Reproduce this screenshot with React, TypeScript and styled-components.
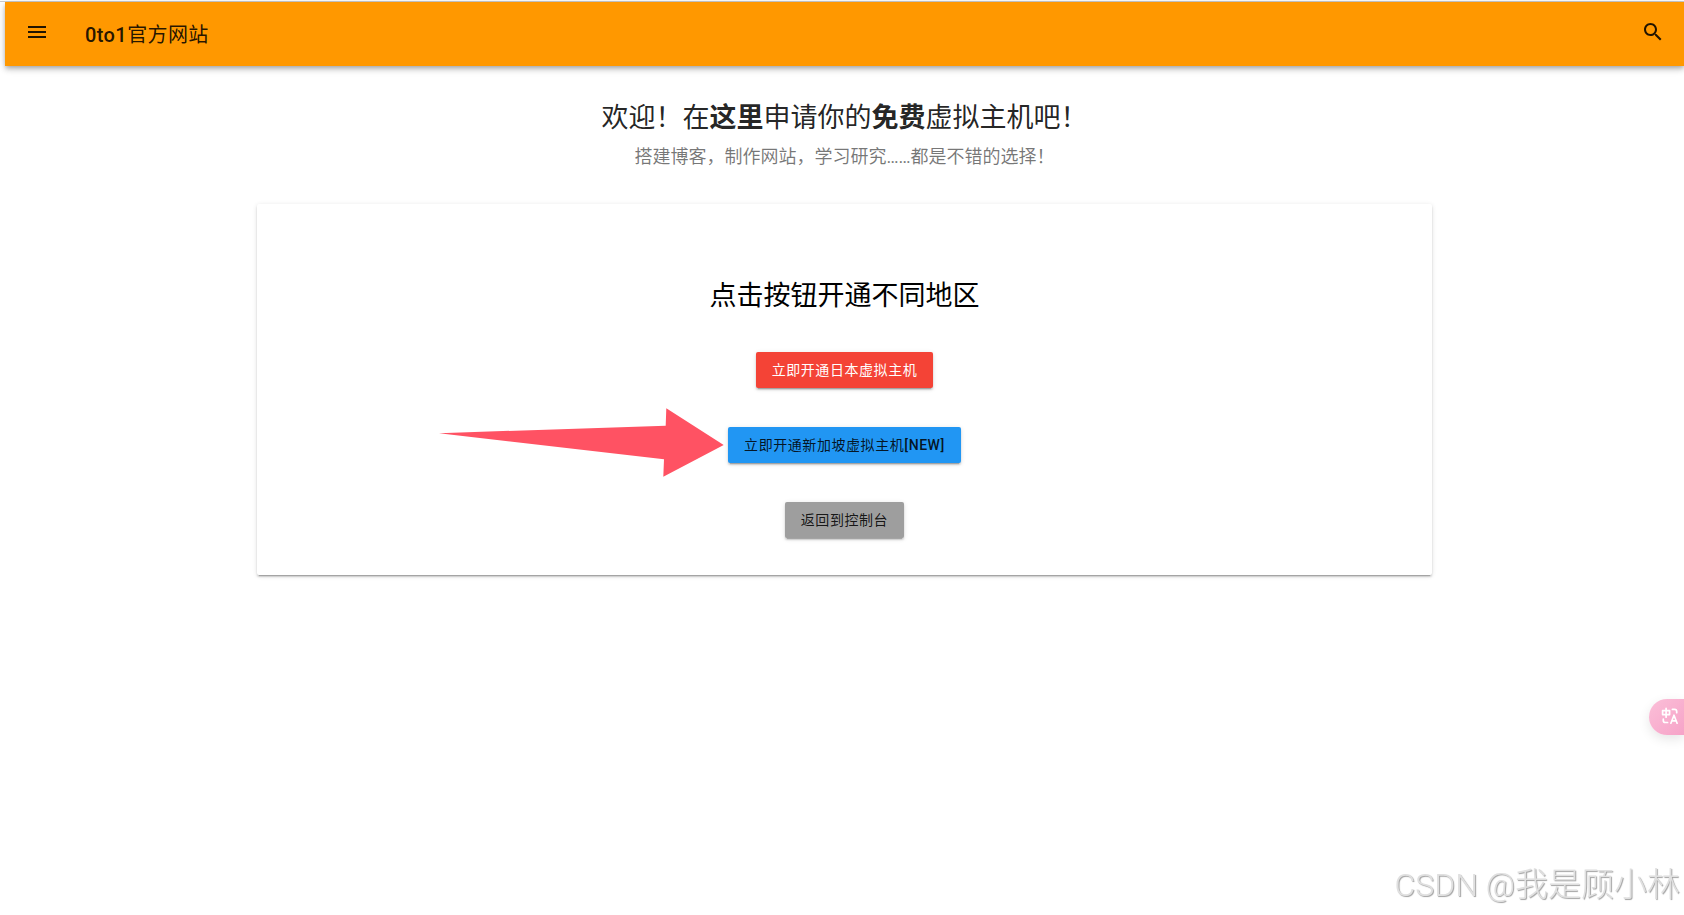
import React from 'react';
import styled, { createGlobalStyle } from 'styled-components';

const GlobalStyle = createGlobalStyle`
  *, *::before, *::after { box-sizing: border-box; }
  body {
    margin: 0;
    background: #fff;
    color: rgba(0, 0, 0, 0.87);
    font-family: Roboto, "Noto Sans CJK SC", sans-serif;
    font-size: 14px;
  }
`;

const Page = styled.div`
  min-height: 100vh;
  padding: 1px 0 0 5px;
  overflow: hidden;
`;

const TopRule = styled.div`
  height: 1px;
  margin-left: -5px;
  background: #ccc;
`;

const AppBar = styled.header`
  display: flex;
  align-items: center;
  height: 64px;
  padding: 0 7px 0 8px;
  background: #ff9800;
  box-shadow: 0 2px 4px -1px rgba(0, 0, 0, 0.2), 0 4px 5px 0 rgba(0, 0, 0, 0.14),
    0 1px 10px 0 rgba(0, 0, 0, 0.12);
`;

const IconButton = styled.button`
  display: flex;
  align-items: center;
  justify-content: center;
  align-self: flex-start;
  width: 48px;
  height: 60px;
  padding: 0;
  border: 0;
  background: none;
  color: rgba(0, 0, 0, 0.87);
  cursor: pointer;
`;

const SiteTitle = styled.a`
  flex: 1;
  padding: 2px 24px 0;
  color: inherit;
  font-size: 20px;
  font-weight: 500;
  letter-spacing: 0.02em;
  line-height: 28px;
  text-decoration: none;
`;

const Regular = styled.span`
  font-weight: 400;
`;

const Medium = styled.span`
  font-weight: 500;
`;

const Intro = styled.section`
  padding: 33px 16px 27px;
  text-align: center;
`;

const Headline = styled.h1`
  margin: 0;
  font-size: 27px;
  font-weight: 400;
  line-height: 38px;
`;

const Subtitle = styled.p`
  margin: 0;
  color: rgba(0, 0, 0, 0.54);
  font-size: 18px;
  line-height: 40px;
`;

const raised = `
  border-radius: 2px;
  box-shadow: 0 3px 1px -2px rgba(0, 0, 0, 0.2), 0 2px 2px 0 rgba(0, 0, 0, 0.14),
    0 1px 5px 0 rgba(0, 0, 0, 0.12);
`;

const Card = styled.main`
  width: 70%;
  margin: 0 auto;
  padding: 73px 16px 37px;
  background: #fff;
  ${raised}
`;

const CardTitle = styled.h2`
  margin: 0;
  color: #000;
  font-size: 27px;
  font-weight: 400;
  line-height: 38px;
  text-align: center;
`;

const Actions = styled.div`
  display: flex;
  flex-direction: column;
  align-items: center;
  gap: 39px;
  margin-top: 37px;
`;

const ActionItem = styled.div`
  position: relative;
`;

const ActionButton = styled.button<{ $fill: string; $light?: boolean }>`
  display: block;
  height: 36px;
  padding: 0 16px;
  border: 0;
  background: ${(p) => p.$fill};
  color: ${(p) => (p.$light ? '#fff' : 'rgba(0, 0, 0, 0.87)')};
  font-family: inherit;
  font-size: 14px;
  font-weight: 400;
  letter-spacing: 0.04em;
  line-height: 36px;
  white-space: nowrap;
  cursor: pointer;
  ${raised}
`;

/* Pointer drawn over the card, beside the button it highlights */
const Arrow = styled.svg`
  position: absolute;
  top: -19px;
  right: calc(100% + 4px);
  pointer-events: none;
`;

const TranslateTab = styled.button`
  position: fixed;
  right: 0;
  bottom: 180px;
  display: flex;
  align-items: center;
  width: 35px;
  height: 36px;
  padding: 0 0 2px 12px;
  border: 0;
  border-radius: 18px 0 0 18px;
  background: linear-gradient(135deg, #fbbfd8, #f6a3c8);
  box-shadow: 0 4px 12px rgba(0, 0, 0, 0.1);
  cursor: pointer;
`;

const Watermark = styled.div`
  position: fixed;
  right: 4px;
  bottom: 8px;
  color: #e0e0e0;
  font-size: 33px;
  font-weight: 300;
  line-height: 44px;
  text-shadow: 1px 1px 1px #a0a0a0;
  white-space: nowrap;
  pointer-events: none;
`;

const WatermarkSite = styled.span`
  font-size: 32px;
`;

export default function App() {
  return (
    <>
      <GlobalStyle />
      <Page>
        <TopRule />
        <AppBar>
          <IconButton aria-label="菜单">
            <svg width="24" height="24" viewBox="0 0 24 24" fill="currentColor">
              <path d="M3 18h18v-2H3v2zm0-5h18v-2H3v2zm0-7v2h18V6H3z" />
            </svg>
          </IconButton>
          <SiteTitle href="#">
            0to1<Regular>官方网站</Regular>
          </SiteTitle>
          <IconButton aria-label="搜索">
            <svg width="24" height="24" viewBox="0 0 24 24" fill="currentColor">
              <path d="M15.5 14h-.79l-.28-.27C15.41 12.59 16 11.11 16 9.5 16 5.91 13.09 3 9.5 3S3 5.91 3 9.5 5.91 16 9.5 16c1.61 0 3.09-.59 4.23-1.57l.27.28v.79l5 4.99L20.49 19l-4.99-5zm-6 0C7.01 14 5 11.99 5 9.5S7.01 5 9.5 5 14 7.01 14 9.5 11.99 14 9.5 14z" />
            </svg>
          </IconButton>
        </AppBar>

        <Intro>
          <Headline>
            欢迎！在<strong>这里</strong>申请你的<strong>免费</strong>虚拟主机吧！
          </Headline>
          <Subtitle>搭建博客，制作网站，学习研究……都是不错的选择！</Subtitle>
        </Intro>

        <Card>
          <CardTitle>点击按钮开通不同地区</CardTitle>
          <Actions>
            <ActionButton $fill="#f44336" $light>
              立即开通日本虚拟主机
            </ActionButton>
            <ActionItem>
              <ActionButton $fill="#2196f3">
                立即开通新加坡虚拟主机<Medium>[NEW]</Medium>
              </ActionButton>
              <Arrow width="285" height="70" viewBox="0 0 285 70" aria-hidden="true">
                <path
                  d="M0 25.2 226.7 17.7 227.3 0.2 284.7 37 224.3 68.8 225 51.3Z"
                  fill="#ff5263"
                />
              </Arrow>
            </ActionItem>
            <ActionButton $fill="#9e9e9e">返回到控制台</ActionButton>
          </Actions>
        </Card>
      </Page>

      <TranslateTab aria-label="翻译">
        <svg
          width="18"
          height="18"
          viewBox="0 0 18 18"
          fill="none"
          stroke="#fff"
          strokeWidth="1.7"
          strokeLinecap="round"
          strokeLinejoin="round"
        >
          <path d="M1.6 3.6h7v4h-7zM5.1 1.4v8.8" />
          <path d="M9.9 16.2 13 8.2l3.1 8M11 13.8h4" />
          <path d="M11.4 2.4h2.2c1.3 0 2.1.8 2.1 2.1v1.2" />
          <path d="M2.3 12.2v1.2c0 1.3.8 2.1 2.1 2.1h2.2" />
        </svg>
      </TranslateTab>
      <Watermark>
        <WatermarkSite>CSDN @</WatermarkSite>我是顾小林
      </Watermark>
    </>
  );
}
